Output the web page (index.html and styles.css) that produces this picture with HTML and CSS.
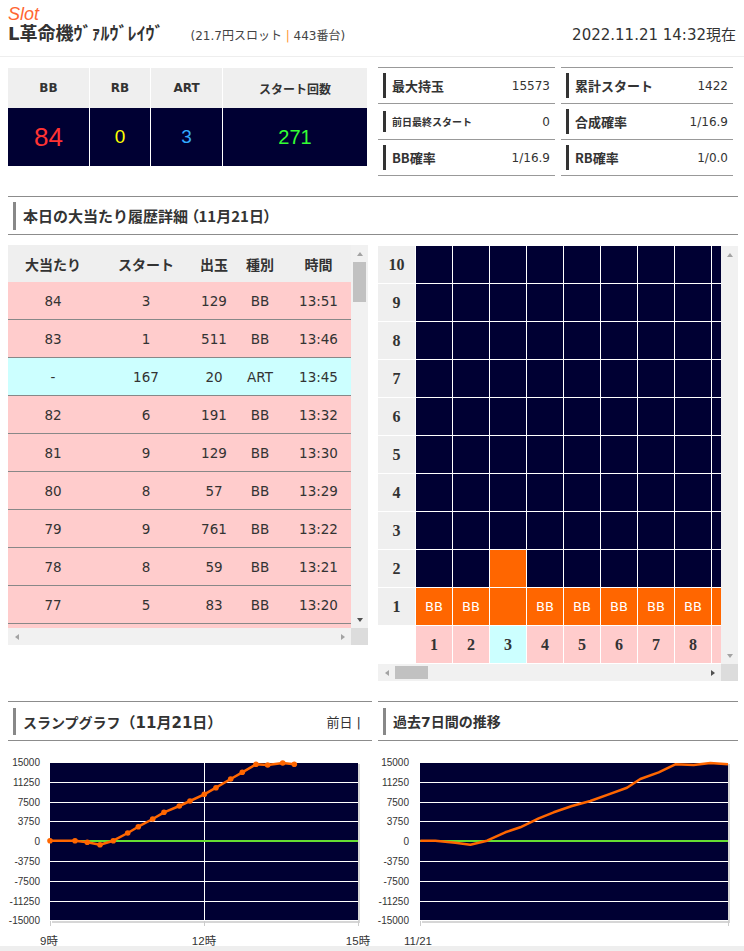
FILE: index.html
```html
<!DOCTYPE html>
<html lang="ja">
<head>
<meta charset="utf-8">
<title>Slot</title>
<link rel="stylesheet" href="styles.css">
</head>
<body>
<header class="top">
  <div class="brand">Slot</div>
  <div class="title-row">
    <h1 class="title">L革命機ｳﾞｧﾙｳﾞﾚｲｳﾞ</h1>
    <span class="sub">(21.7円スロット <span class="sep">|</span> 443番台)</span>
    <span class="date">2022.11.21 14:32現在</span>
  </div>
</header>

<main class="page">
  <section class="stats-row">
    <div class="counter">
      <div class="h">BB</div>
      <div class="h sl">RB</div>
      <div class="h sl">ART</div>
      <div class="h sl">スタート回数</div>
      <div class="v red">84</div>
      <div class="v sl yellow">0</div>
      <div class="v sl blue">3</div>
      <div class="v sl green">271</div>
    </div>
    <div class="info">
      <div class="info-col a">
        <div class="info-row"><span class="info-label">最大持玉</span><span class="info-val">15573</span></div>
        <div class="info-row short"><span class="info-label small">前日最終スタート</span><span class="info-val">0</span></div>
        <div class="info-row"><span class="info-label">BB確率</span><span class="info-val">1/16.9</span></div>
      </div>
      <div class="info-col b">
        <div class="info-row"><span class="info-label">累計スタート</span><span class="info-val">1422</span></div>
        <div class="info-row"><span class="info-label">合成確率</span><span class="info-val">1/16.9</span></div>
        <div class="info-row"><span class="info-label">RB確率</span><span class="info-val">1/0.0</span></div>
      </div>
    </div>
  </section>

  <div class="sec sec-full"><h2 class="sec-title cjk">本日の大当たり履歴詳細<span class="paren">（11月21日）</span></h2></div>

  <section class="row2">
    <div class="hist">
      <div class="hist-body">
        <div class="hrow head"><span>大当たり</span><span>スタート</span><span>出玉</span><span>種別</span><span>時間</span></div>
        <div class="hrow data"><span>84</span><span>3</span><span>129</span><span>BB</span><span>13:51</span></div>
        <div class="hrow data"><span>83</span><span>1</span><span>511</span><span>BB</span><span>13:46</span></div>
        <div class="hrow data art"><span>-</span><span>167</span><span>20</span><span>ART</span><span>13:45</span></div>
        <div class="hrow data"><span>82</span><span>6</span><span>191</span><span>BB</span><span>13:32</span></div>
        <div class="hrow data"><span>81</span><span>9</span><span>129</span><span>BB</span><span>13:30</span></div>
        <div class="hrow data"><span>80</span><span>8</span><span>57</span><span>BB</span><span>13:29</span></div>
        <div class="hrow data"><span>79</span><span>9</span><span>761</span><span>BB</span><span>13:22</span></div>
        <div class="hrow data"><span>78</span><span>8</span><span>59</span><span>BB</span><span>13:21</span></div>
        <div class="hrow data"><span>77</span><span>5</span><span>83</span><span>BB</span><span>13:20</span></div>
        <div class="hrow data"></div>
      </div>
      <div class="sb-v">
        <div class="sb-btn"><i class="tri up"></i></div>
        <div class="sb-track"><div class="thumb-v"></div></div>
        <div class="sb-btn"><i class="tri down dark"></i></div>
      </div>
      <div class="sb-h">
        <div class="sb-btn"><i class="tri left"></i></div>
        <div class="sb-track-h"></div>
        <div class="sb-btn"><i class="tri right"></i></div>
      </div>
      <div class="corner"></div>
    </div>

    <div class="grid-wrap">
      <div class="grid-body">
        <div class="slump-grid">
          <div class="lbl">10</div><div class="c"></div><div class="c"></div><div class="c"></div><div class="c"></div><div class="c"></div><div class="c"></div><div class="c"></div><div class="c"></div><div class="c"></div>
          <div class="lbl">9</div><div class="c"></div><div class="c"></div><div class="c"></div><div class="c"></div><div class="c"></div><div class="c"></div><div class="c"></div><div class="c"></div><div class="c"></div>
          <div class="lbl">8</div><div class="c"></div><div class="c"></div><div class="c"></div><div class="c"></div><div class="c"></div><div class="c"></div><div class="c"></div><div class="c"></div><div class="c"></div>
          <div class="lbl">7</div><div class="c"></div><div class="c"></div><div class="c"></div><div class="c"></div><div class="c"></div><div class="c"></div><div class="c"></div><div class="c"></div><div class="c"></div>
          <div class="lbl">6</div><div class="c"></div><div class="c"></div><div class="c"></div><div class="c"></div><div class="c"></div><div class="c"></div><div class="c"></div><div class="c"></div><div class="c"></div>
          <div class="lbl">5</div><div class="c"></div><div class="c"></div><div class="c"></div><div class="c"></div><div class="c"></div><div class="c"></div><div class="c"></div><div class="c"></div><div class="c"></div>
          <div class="lbl">4</div><div class="c"></div><div class="c"></div><div class="c"></div><div class="c"></div><div class="c"></div><div class="c"></div><div class="c"></div><div class="c"></div><div class="c"></div>
          <div class="lbl">3</div><div class="c"></div><div class="c"></div><div class="c"></div><div class="c"></div><div class="c"></div><div class="c"></div><div class="c"></div><div class="c"></div><div class="c"></div>
          <div class="lbl">2</div><div class="c"></div><div class="c"></div><div class="c o"></div><div class="c"></div><div class="c"></div><div class="c"></div><div class="c"></div><div class="c"></div><div class="c"></div>
          <div class="lbl">1</div><div class="c o">BB</div><div class="c o">BB</div><div class="c o"></div><div class="c o">BB</div><div class="c o">BB</div><div class="c o">BB</div><div class="c o">BB</div><div class="c o">BB</div><div class="c o"></div>
          <div class="blank"></div><div class="num">1</div><div class="num">2</div><div class="num cy">3</div><div class="num">4</div><div class="num">5</div><div class="num">6</div><div class="num">7</div><div class="num">8</div><div class="num"></div>
        </div>
      </div>
      <div class="sb-v">
        <div class="sb-btn"><i class="tri up"></i></div>
        <div class="sb-track"></div>
        <div class="sb-btn"><i class="tri down"></i></div>
      </div>
      <div class="sb-h">
        <div class="sb-btn"><i class="tri left"></i></div>
        <div class="sb-track-h"><div class="thumb-h"></div></div>
        <div class="sb-btn"><i class="tri right dark"></i></div>
      </div>
      <div class="corner"></div>
    </div>
  </section>

  <section class="row3">
    <div class="col-l">
      <div class="sec sec-l"><h2 class="sec-title sm">スランプグラフ<span class="paren2">（11月21日）</span></h2><span class="prev">前日 |</span></div>
      <svg class="chart" width="364" height="205" viewBox="8 741 364 205">
        <rect x="52" y="764" width="308" height="159" fill="#d6d6d6"/>
        <rect x="50" y="762" width="308" height="159" fill="#000033"/>
        <g stroke="#ffffff" stroke-width="1">
          <line x1="50" y1="762.5" x2="358" y2="762.5"/>
          <line x1="50" y1="782.5" x2="358" y2="782.5"/>
          <line x1="50" y1="802.5" x2="358" y2="802.5"/>
          <line x1="50" y1="821.5" x2="358" y2="821.5"/>
          <line x1="50" y1="861.5" x2="358" y2="861.5"/>
          <line x1="50" y1="881.5" x2="358" y2="881.5"/>
          <line x1="50" y1="901.5" x2="358" y2="901.5"/>
          <line x1="50" y1="920.5" x2="358" y2="920.5"/>
          <line x1="204.5" y1="762" x2="204.5" y2="921"/>
        </g>
        <line x1="50" y1="841" x2="358" y2="841" stroke="#66dd33" stroke-width="2"/>
        <g stroke="#cccccc" stroke-width="1">
          <line x1="50.5" y1="921" x2="50.5" y2="926"/>
          <line x1="204.5" y1="921" x2="204.5" y2="926"/>
          <line x1="358.5" y1="921" x2="358.5" y2="926"/>
        </g>
        <g class="ax" text-anchor="end">
          <text x="40" y="765.8">15000</text>
          <text x="40" y="785.8">11250</text>
          <text x="40" y="805.8">7500</text>
          <text x="40" y="825.3">3750</text>
          <text x="40" y="844.8">0</text>
          <text x="40" y="864.8">-3750</text>
          <text x="40" y="884.8">-7500</text>
          <text x="40" y="904.8">-11250</text>
          <text x="40" y="924.3">-15000</text>
        </g>
        <g class="axx" text-anchor="middle">
          <text x="49" y="945">9時</text>
          <text x="204" y="945">12時</text>
          <text x="358" y="945">15時</text>
        </g>
        <polyline fill="none" stroke="#ff6600" stroke-width="2.5" stroke-linejoin="round" points="50,840.7 75,840.7 87.3,842.3 100,844.7 113.3,840.7 127.7,833 138.3,826.7 152.7,819 164,812.3 179.3,806 190,801 204.3,794.3 216,787.7 230.7,779 242.3,772.3 256,764.3 267.7,765 282.7,763 294.3,764.3"/>
        <g fill="#ff6600">
          <circle cx="50" cy="840.7" r="2.8"/><circle cx="75" cy="840.7" r="2.8"/><circle cx="87.3" cy="842.3" r="2.8"/><circle cx="100" cy="844.7" r="2.8"/><circle cx="113.3" cy="840.7" r="2.8"/><circle cx="127.7" cy="833" r="2.8"/><circle cx="138.3" cy="826.7" r="2.8"/><circle cx="152.7" cy="819" r="2.8"/><circle cx="164" cy="812.3" r="2.8"/><circle cx="179.3" cy="806" r="2.8"/><circle cx="190" cy="801" r="2.8"/><circle cx="204.3" cy="794.3" r="2.8"/><circle cx="216" cy="787.7" r="2.8"/><circle cx="230.7" cy="779" r="2.8"/><circle cx="242.3" cy="772.3" r="2.8"/><circle cx="256" cy="764.3" r="2.8"/><circle cx="267.7" cy="765" r="2.8"/><circle cx="282.7" cy="763" r="2.8"/><circle cx="294.3" cy="764.3" r="2.8"/>
        </g>
      </svg>
    </div>
    <div class="col-r">
      <div class="sec sec-r"><h2 class="sec-title sm">過去7日間の推移</h2></div>
      <svg class="chart" width="360" height="205" viewBox="378 741 360 205">
        <rect x="422" y="764" width="308" height="159" fill="#d6d6d6"/>
        <rect x="420" y="762" width="308" height="159" fill="#000033"/>
        <g stroke="#ffffff" stroke-width="1">
          <line x1="420" y1="762.5" x2="728" y2="762.5"/>
          <line x1="420" y1="782.5" x2="728" y2="782.5"/>
          <line x1="420" y1="802.5" x2="728" y2="802.5"/>
          <line x1="420" y1="821.5" x2="728" y2="821.5"/>
          <line x1="420" y1="861.5" x2="728" y2="861.5"/>
          <line x1="420" y1="881.5" x2="728" y2="881.5"/>
          <line x1="420" y1="901.5" x2="728" y2="901.5"/>
          <line x1="420" y1="920.5" x2="728" y2="920.5"/>
        </g>
        <line x1="420" y1="841" x2="728" y2="841" stroke="#66dd33" stroke-width="2"/>
        <g stroke="#cccccc" stroke-width="1">
          <line x1="420.5" y1="921" x2="420.5" y2="926"/>
          <line x1="728.5" y1="921" x2="728.5" y2="926"/>
        </g>
        <g class="ax" text-anchor="end">
          <text x="409" y="765.8">15000</text>
          <text x="409" y="785.8">11250</text>
          <text x="409" y="805.8">7500</text>
          <text x="409" y="825.3">3750</text>
          <text x="409" y="844.8">0</text>
          <text x="409" y="864.8">-3750</text>
          <text x="409" y="884.8">-7500</text>
          <text x="409" y="904.8">-11250</text>
          <text x="409" y="924.3">-15000</text>
        </g>
        <g class="axx" text-anchor="middle">
          <text x="418" y="945">11/21</text>
        </g>
        <polyline fill="none" stroke="#ff6600" stroke-width="2.5" stroke-linejoin="round" points="420.3,840.7 435.3,840.7 455.3,842.7 470.3,844.7 487,840.7 505.3,832.3 520.3,827.3 538.7,818.3 553.7,812.3 572,806 590.3,801 608.7,794.3 627,787.7 640.3,779 658.7,772.3 675.3,764.3 693.7,765 710.3,763 728,764.3"/>
      </svg>
    </div>
  </section>
</main>
<div class="band"></div>
</body>
</html>
```

FILE: styles.css
```css
* { box-sizing: border-box; }

body {
  margin: 0;
  width: 744px;
  background: #fff;
  color: #333;
  font-family: "DejaVu Sans", "Noto Sans CJK JP", sans-serif;
}

/* header */
.top {
  height: 57px;
  padding: 5px 8px 0;
  border-bottom: 1px solid #eeeeee;
}
.brand {
  font: italic 18px/18px "Liberation Sans", sans-serif;
  color: #ff6633;
}
.title-row {
  display: flex;
  align-items: baseline;
  line-height: 18px;
  margin-top: 2px;
}
.title {
  margin: 0;
  font-size: 18px;
  font-weight: bold;
  line-height: 18px;
  color: #333;
}
.sub {
  margin-left: 27px;
  font-size: 12px;
  color: #444;
}
.sep { color: #ff9933; }
.date {
  margin-left: auto;
  font-size: 15px;
  color: #333;
}

.page { padding: 0 6px 0 8px; }

/* top stats */
.stats-row {
  display: flex;
  gap: 11px;
  margin-top: 10px;
  align-items: flex-start;
}
.counter {
  width: 359px;
  margin-top: 1px;
  display: grid;
  grid-template-columns: 81px 61px 72px 145px;
}
.counter .h {
  height: 40px;
  background: #efefef;
  display: flex;
  align-items: center;
  justify-content: center;
  font-size: 12px;
  font-weight: bold;
  color: #333;
}
.counter .v {
  height: 58px;
  background: #000033;
  display: flex;
  align-items: center;
  justify-content: center;
  font-family: "Liberation Sans", sans-serif;
}
.counter .sl { border-left: 1px solid #fff; }
.red { color: #ff3333; font-size: 26px; }
.yellow { color: #ffff00; font-size: 19px; }
.blue { color: #33aaff; font-size: 19px; }
.green { color: #33ff33; font-size: 20px; }

.info { display: flex; gap: 6px; }
.info-col { border-top: 1px solid #999; }
.info-col.a { width: 177px; }
.info-col.b { width: 172px; }
.info-row {
  height: 36px;
  border-bottom: 1px solid #999;
  display: flex;
  align-items: center;
  padding: 0 5px;
}
.info-row::before {
  content: "";
  width: 3px;
  height: 25px;
  background: #333;
  margin-right: 6px;
  flex: none;
}
.info-row.short::before { height: 21px; }
.info-label {
  font-size: 13px;
  font-weight: bold;
  font-family: "Noto Sans CJK JP", sans-serif;
  color: #333;
}
.info-label.small { font-size: 10px; }
.info-val {
  margin-left: auto;
  font-size: 12px;
  color: #333;
}

/* section headers */
.sec {
  display: flex;
  align-items: center;
  height: 39px;
  padding-left: 5px;
  border-top: 1px solid #8c8c8c;
  border-bottom: 1px solid #8c8c8c;
}
.sec::before {
  content: "";
  width: 3px;
  height: 28px;
  background: #888;
  margin-right: 7px;
  flex: none;
}
.sec-full { margin-top: 20px; width: 730px; }
.sec-title {
  margin: 0;
  font-size: 15px;
  font-weight: bold;
  color: #333;
}
.sec-title.cjk { font-family: "Noto Sans CJK JP", sans-serif; }
.paren { font-feature-settings: "palt"; margin-left: 3px; }
.sec-title.sm { font-size: 14px; }
.paren2 { font-size: 15px; }
.sec-l, .sec-r { height: 40px; }
.sec-l::before, .sec-r::before { height: 27px; }
.prev {
  margin-left: auto;
  padding-right: 11px;
  font-size: 13px;
  color: #333;
}

/* history + grid */
.row2 {
  display: flex;
  gap: 10px;
  margin-top: 10px;
  align-items: flex-start;
}
.hist {
  width: 360px;
  height: 400px;
  display: grid;
  grid-template-columns: 343px 17px;
  grid-template-rows: 383px 17px;
}
.hist-body { overflow: hidden; background: #fff; }
.hrow {
  display: grid;
  grid-template-columns: 90px 96px 40px 52px 65px;
}
.hrow span {
  display: flex;
  align-items: center;
  justify-content: center;
}
.hrow.head {
  height: 37px;
  background: #efefef;
  font-family: "Noto Sans CJK JP", sans-serif;
  font-weight: bold;
  font-size: 14px;
}
.hrow.data {
  height: 38px;
  background: #ffcccc;
  border-bottom: 1px solid #888;
  font-size: 13.5px;
  color: #333;
}
.hrow.art { background: #ccffff; }

.grid-wrap {
  width: 360px;
  height: 435px;
  margin-top: 1px;
  display: grid;
  grid-template-columns: 343px 17px;
  grid-template-rows: 418px 17px;
}
.grid-body { overflow: hidden; background: #fff; }
.slump-grid {
  display: grid;
  grid-template-columns: 37px repeat(9, 36px);
  grid-auto-rows: 37px;
  gap: 1px;
  width: 370px;
  background: #fff;
}
.slump-grid > div {
  display: flex;
  align-items: center;
  justify-content: center;
}
.lbl {
  background: #efefef;
  font: bold 16px "Liberation Serif", serif;
  color: #333;
}
.c { background: #000033; }
.c.o { background: #ff6600; color: #fff; font-size: 13px; }
.num {
  background: #ffcccc;
  font: bold 16px "Liberation Serif", serif;
  color: #333;
}
.num.cy { background: #ccffff; }
.blank { background: #fff; }

/* fake scrollbars */
.sb-v {
  background: #f1f1f1;
  display: flex;
  flex-direction: column;
  align-items: center;
}
.sb-h {
  background: #f1f1f1;
  display: flex;
  align-items: center;
}
.sb-btn {
  width: 17px;
  height: 17px;
  flex: none;
  display: flex;
  align-items: center;
  justify-content: center;
}
.sb-track { flex: 1; display: flex; flex-direction: column; align-items: center; }
.sb-track-h { flex: 1; height: 17px; display: flex; align-items: center; }
.thumb-v { width: 13px; height: 40px; background: #c1c1c1; }
.thumb-h { width: 33px; height: 13px; background: #c1c1c1; }
.corner { background: #dcdcdc; }
.tri { width: 0; height: 0; border-style: solid; border-color: transparent; }
.tri.up { border-width: 0 3.5px 4px; border-bottom-color: #a3a3a3; }
.tri.down { border-width: 4px 3.5px 0; border-top-color: #a3a3a3; }
.tri.left { border-width: 3.5px 4px 3.5px 0; border-right-color: #a3a3a3; }
.tri.right { border-width: 3.5px 0 3.5px 4px; border-left-color: #a3a3a3; }
.tri.down.dark { border-top-color: #505050; }
.tri.right.dark { border-left-color: #505050; }

/* charts */
.row3 {
  display: flex;
  gap: 6px;
  margin-top: 20px;
}
.col-l { width: 364px; }
.col-r { width: 360px; }
.chart { display: block; overflow: visible; }
.ax {
  font-family: "Liberation Sans", sans-serif;
  font-size: 10px;
  fill: #333;
}
.axx {
  font-family: "Liberation Sans", "Noto Sans CJK JP", sans-serif;
  font-size: 11.5px;
  fill: #333;
}

.band { height: 10px; background: #eeeeee; }
```
